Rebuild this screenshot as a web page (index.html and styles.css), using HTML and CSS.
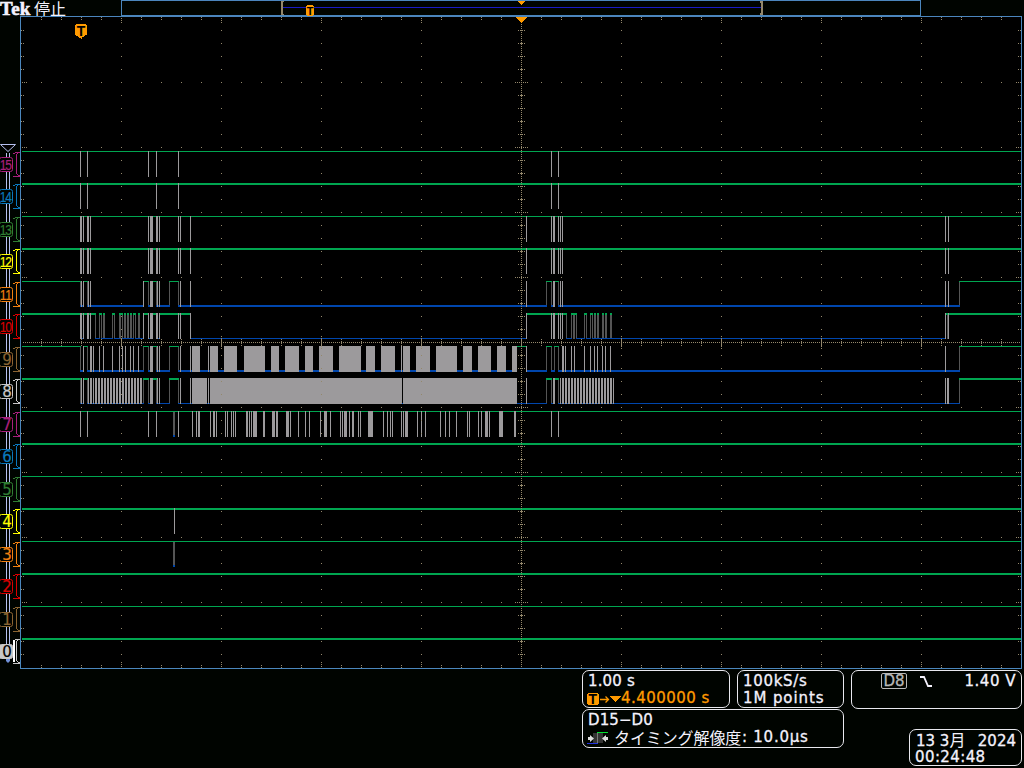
FILE: index.html
```html
<!DOCTYPE html>
<html lang="ja">
<head>
<meta charset="utf-8">
<title>Tek</title>
<link rel="stylesheet" href="styles.css">
</head>
<body>
<header class="top">
  <div class="status"><span class="brand">Tek</span><span class="state">停止</span></div>
  <svg class="overview" viewBox="121 0 800 16" width="800" height="16">
    <path class="frame-line" d="M121.5 16V.5H920.5V16M121 15.5H921"/>
    <path class="record" d="M283 7.5H761"/>
    <path class="tan" d="M281 1h3v1h-1v12h1v1h-3zM760 1h3v14h-3v-2h1V3h-1z"/>
    <path class="amber" d="M307 5h6v1h1v9h-1v1h-6v-1h-1V6h1z"/>
    <text class="mark" x="310" y="15" font-size="11">T</text>
    <path class="amber" d="M518 1h7v1h-1v1h-1v1h-1v1h-1V4h-1V3h-1V2h-1z"/>
  </svg>
</header>
<main class="stage">
  <svg id="gutter" viewBox="0 16 20 653" width="20" height="653"></svg>
  <svg id="plot" viewBox="20 16 1004 653" width="1004" height="653"></svg>
</main>
<footer class="readouts">
  <div class="left">
    <div class="pair">
      <section class="box time">
        <p class="w-scale">1.00 s</p>
        <p class="delay"><svg viewBox="0 0 34 14" width="34" height="14">
          <path class="amber" d="M1 1h10v1h1v10h-1v1H1v-1H0V2h1z"/><text class="mark" x="6" y="12" font-size="14">T</text>
          <path class="arrow" d="M13 7.5h8M18.500 4.500l3 3l-3 3"/><path class="amber" d="M23 4h11l-5.500 6z"/>
        </svg><span>4.400000 s</span></p>
      </section>
      <section class="box rate"><p class="w-rate">100kS/s</p><p class="w-pts">1M points</p></section>
    </div>
    <section class="box digital">
      <p class="w-bus">D15−D0</p>
      <p class="res"><svg viewBox="0 0 22 14" width="22" height="14">
        <path fill="#333" d="M6 2h10v10H6z"/><path fill="#777" d="M10 1h1v12h-1z"/>
        <path fill="#2233dd" d="M0 12h11v1H0z"/><path fill="#00e030" d="M10 1h11v1H10z"/>
        <path fill="#ddd" d="M1 6h2V4l4 3.500L3 11V9H1zM21 6h-2V4l-4 3.500l4 3.500V9h2z"/>
      </svg><span class="kana">タイミング解像度</span><span class="w-res">: 10.0µs</span></p>
    </section>
  </div>
  <div class="right">
    <section class="box trig">
      <span class="src">D8</span>
      <svg viewBox="0 0 14 14" width="14" height="14"><path class="edge" d="M1 2h4l4 9h4"/></svg>
      <span class="level">1.40 V</span>
    </section>
    <section class="box clock"><p class="date"><span>13 3<span class="month">月</span></span><span>2024</span></p><p class="hour">00:24:48</p></section>
  </div>
</footer>
<script src="scope.js"></script>
</body>
</html>
```

FILE: styles.css
```css
body { margin: 0; width: 1024px; height: 768px; overflow: hidden; background: #000400; color: #f4f2fc; font-family: "DejaVu Sans", "Noto Sans CJK JP", sans-serif; font-size: 15px; }
p { margin: 0; white-space: pre; }
svg { display: block; flex: none; }
.top { display: flex; height: 16px; }
.status { display: flex; width: 121px; height: 16px; line-height: 16px; white-space: nowrap; }
.brand { font: bold 19px/17px "Liberation Serif", serif; width: 34px; letter-spacing: .2px; -webkit-text-stroke: .6px #f4f2fc; }
.state { font: 400 16px/16px "Noto Sans CJK JP", sans-serif; }
.frame-line { fill: none; stroke: #4b86bd; shape-rendering: crispEdges; }
.record { stroke: #1a1ac4; }
.tan { fill: #94886c; }
.amber { fill: #ff9a00; shape-rendering: crispEdges; }
.mark { font-family: "Liberation Sans", sans-serif; font-weight: bold; text-anchor: middle; fill: #000; }
.stage { display: flex; height: 653px; }
#plot { background: #000; }
#plot, #gutter .rail, #gutter .bracket { shape-rendering: crispEdges; }
.hi { fill: #00a550; }
.lo { fill: #0046ad; }
.burst { fill: #9c9a9c; }
.slow { fill: #555; }
.dot { fill: #94886c; }
.rail { fill: #b4c0ee; }
.bracket { fill: none; }
.tag { font-family: "DejaVu Sans", sans-serif; font-size: 15px; text-anchor: middle; stroke-width: .2px; }
.tag.narrow { font-family: "Liberation Sans", sans-serif; }
.readouts { display: flex; height: 99px; padding-left: 582px; box-sizing: border-box; gap: 7px; -webkit-text-stroke: .3px; }
.left { display: flex; flex-direction: column; gap: 1px; padding-top: 1px; }
.pair { display: flex; gap: 7px; }
.box { box-sizing: border-box; border: 1px solid #e8e8ee; border-radius: 7px; line-height: 17px; }
.time { width: 148px; height: 38px; padding: 2px 0 0 5px; }
.rate { width: 107px; height: 38px; padding: 2px 0 0 5px; }
.digital { width: 262px; height: 39px; padding: 2px 0 0 5px; }
.delay { display: flex; align-items: center; height: 17px; color: #ff9a00; letter-spacing: .45px; }
.delay svg { margin-left: -1px; }
.arrow { fill: none; stroke: #ff9a00; stroke-width: 1.3; }
.w-scale { letter-spacing: .15px; }
.w-rate { letter-spacing: .7px; }
.w-pts { letter-spacing: .9px; }
.w-bus { letter-spacing: .1px; }
.res { display: flex; align-items: center; height: 17px; margin-left: -1px; }
.kana { font: 400 16px/17px "Noto Sans CJK JP", sans-serif; margin-left: 5px; width: 128px; letter-spacing: -.1px; -webkit-text-stroke: 0; }
.w-res { letter-spacing: .75px; }
.right { display: flex; flex-direction: column; align-items: flex-end; padding-top: 1px; gap: 20px; }
.trig { display: flex; width: 171px; height: 39px; padding: 2px 5px 0 29px; }
.src { height: 14px; width: 24px; border: 1px solid #b8b8b8; border-radius: 2px; color: #b8b8b8; line-height: 15px; text-align: center; }
.trig svg { margin: 2px 0 0 12px; }
.edge { fill: none; stroke: #f4f2fc; stroke-width: 1.8; }
.level { margin-left: auto; letter-spacing: .5px; }
.clock { width: 113px; height: 37px; padding: 3px 5px 0 6px; line-height: 16px; }
.date { display: flex; justify-content: space-between; align-items: flex-start; height: 16px; }
.date > span { height: 16px; }
.month { font: 400 16px/1 "Noto Sans CJK JP", sans-serif; line-height: 0; -webkit-text-stroke: 0; }
.hour { letter-spacing: .4px; margin-left: -1px; }
```

FILE: scope.js
```js
const NS = "http://www.w3.org/2000/svg";
const plot = document.getElementById("plot");
const gutter = document.getElementById("gutter");

function add(parent, tag, attrs, text) {
  const el = document.createElementNS(NS, tag);
  for (const k in attrs) el.setAttribute(k, attrs[k]);
  if (text) el.textContent = text;
  parent.append(el);
}
const bar = (cls, x, y, w, h) => add(plot, "rect", { class: cls, x, y, width: w, height: h });

// "a-b" is an inclusive span of sample columns, "a" a single column
const spans = s => s.trim().split(/\s+/).filter(Boolean).map(t => {
  const [a, b] = t.split("-").map(Number);
  return [a, b || a];
});
const stripes = (a, b) => {
  let s = "";
  for (let x = a; x <= b; x += 3) s += ` ${x}-${Math.min(x + 1, b)}`;
  return s;
};

const ALL = "22-1020";
const clocks = "80-81 83 87-88 90 148 150-152 156-157 159 178 180 190 526 551 553-554 558 560 562 945 948";
const states11 = {
  hi: "22-80 84-87 143-148 152-156 169-178 546-551 554-558 959-1020",
  lo: "80-83 87-143 148-150 156-169 178-546 551-553 558-959"
};
const waves = {
  15: { hi: ALL, burst: "80 87 148 156 178 551 558" },
  14: { hi: ALL, burst: "80 87 156 178 551 558" },
  13: { hi: ALL, burst: clocks },
  12: { hi: ALL, burst: clocks },
  11: { ...states11, slow: "80 87 148 156 169 178 546 551 558 959", burst: "81 83 88 90 143 150-152 157 159 180 190 526 553-554 560 562 945 948" },
  10: {
    hi: "22-95 99-101 103-104 112-114 119-122 124-125 127-128 130-131 133-135 138-139 143-147 152-156 159-190 526-566 571-576 584-586 590-592 594-595 597-598 602-603 605-606 610-611 945-1020",
    lo: "80-83 95-99 101-103 104-112 114-119 122-124 125-127 128-130 131-133 135-138 139-143 148-150 156-158 190-526 562-562 566-571 576-584 586-590 592-594 595-597 598-602 603-605 606-610 611-945",
    slow: "95 99 101 103-104 112 114 119-120 122 124-125 127-128 130-131 133 135 138-139 566 571 573-574 576 584 586 590 592 594-595 597-598 602-603 605-606 610-611 947",
    burst: "80-81 83 87-88 90 143 148 150-152 156-157 159 178 180 190 526 551 553-554 558 560 562 945 948"
  },
  9: {
    hi: "22-80 83-87 143-148 152-156 169-178 517-526 546-551 554-558 959-1020",
    lo: "80-83 87-143 148-150 156-169 178-516 526-546 551-554 558-959",
    slow: "80 87 143 148 156 169 178 546 551 554 558 959",
    burst: "83 90-91 93 99 103 112 119 122 125 130 133 138 150-152 157 159 180 190 192-199 208 210-217 224-236 244-264 271-278 285-298 305-312 319-332 339-360 366-374 381-394 401 403-409 416-429 436-456 463-471 478-490 497-505 512-516 526 562-563 565 571 574 584 590 594 597 602 605 610 945"
  },
  8: {
    hi: "22-80 83-87 143-148 152-156 169-178 546-551 554-558 959-1020",
    lo: "80-83 87-143 148-150 156-169 178-192 206-210 402 517-546 551-553 558-959",
    slow: "80 87 143 148 156 169 178 546 551 558 959",
    burst: "81 83 88 90-91 93" + stripes(95, 141) + " 150-152 157 159 180 190 192-206 208 210-401 403-516 526 553-554 560" + stripes(562, 613) + " 945 947-948"
  },
  7: { hi: ALL, slow: "173-174", burst: "80 87 148 156 178 192 196 198-199 210 213-214 216 225 227 231 233 235 246-247 249 251 253-256 263-264 272-274 276-277 286-288 290 298 305 309 320 324-326 330 340 342 344-346 349 352-353 358 360 368-372 383 387 390 392 401 403 405-407 417 421 425 440 445 449 456 467 469 478 481 485-487 489 499-502 514-515 551 558" },
  4: { hi: ALL, burst: "174" },
  3: { hi: ALL, slow: "173-174" }
};

const names = ["#c8c8c8", "#8a6432", "#d80000", "#f08010", "#ffff00", "#2f7d32", "#0a78bc", "#a8207c"];

// rails behind the channel tags
for (const x of [6, 9]) add(gutter, "rect", { class: "rail", x, y: 153, width: 1, height: 508 });
add(gutter, "path", { d: "M.5 144.500H15.500L8 151.500Z", fill: "#000", stroke: "#b4c0ee" });
add(gutter, "path", { d: "M6 659v2l2 2l2-2v-2", fill: "#7090d8" });

for (let ch = 15; ch >= 0; ch--) {
  const odd = ch % 2;
  const y = Math.floor(151 + (15 - ch) * 32.5);
  const w = waves[ch] || { hi: ALL };
  for (const [a, b] of spans(w.hi)) bar("hi", a, y, b - a + 1, odd ? 1 : 2);
  for (const [a, b] of spans(w.slow || "")) bar("slow", a, y + (odd ? 1 : 2), b - a + 1, 24);
  for (const [a, b] of spans(w.lo || "")) bar("lo", a, y + (odd ? 24 : 25), b - a + 1, odd ? 2 : 1);
  for (const [a, b] of spans(w.burst || "")) bar("burst", a, y, b - a + 1, 26);
  if (ch === 7 || ch === 3) bar("lo", 173, y + 24, 2, 2);

  const on = ch === 0;
  const color = names[ch % 8];
  add(gutter, "rect", { x: -.5, y: y + 6.5, width: 13, height: 14, rx: 2, fill: on ? "#c8c8c8" : "#000400", stroke: color });
  add(gutter, "path", { class: "bracket", d: `M13 ${y + 2.5}h2M15 ${y + 1.5}h5M17 ${y + 2.5}h1M16.500 ${y + 3}V${y + 23}M17 ${y + 23.5}h1M18 ${y + 24.5}h2M13 ${y + 25.5}h7`, stroke: color });
  if (on) add(gutter, "path", { class: "bracket", d: `M14 ${y + 2}V${y + 24}`, stroke: "#fff", "stroke-width": 2 });
  const ink = { fill: on ? "#000" : color, stroke: on ? "#000" : color };
  if (ch > 9) {
    // two digits share the width of one tag
    for (const [i, x] of [[0, 3], [1, 8.5]]) {
      add(gutter, "text", { ...ink, class: "tag narrow", transform: `translate(${x} ${y + 19}) scale(.8 1)` }, String(ch)[i]);
    }
  } else add(gutter, "text", { ...ink, class: "tag", x: 7, y: y + 19 }, String(ch));
}

// graticule: 10 x 10 divisions of 100 x 65 px around (521, 342)
let d = "";
const dot = (x, y) => { d += `M${x} ${y}h1v1h-1z`; };
for (let y = 82; y <= 602; y += 65) {
  if (y === 342) continue;
  for (let x = 41; x < 1020; x += 20) dot(x, y);
  for (const k of [0, 2, 4]) { dot(22 + k, y); dot(1020 - k, y); }
  for (let k = -6; k <= 6; k += 2) dot(521 + k, y);
}
for (let y = 30; y < 667; y += 13) {
  if (y === 342) continue;
  for (let x = 121; x <= 921; x += 100) dot(x, y);
  if ((y - 17) % 65 === 0) continue;
  dot(21, y); dot(23, y); dot(1018, y); dot(1020, y);
  for (const k of [-3, -1, 0, 1, 3]) dot(521 + k, y);
}
for (let x = 23; x < 1021; x += 2) dot(x, 342);
for (let y = 18; y < 668; y += 2) dot(521, y);
for (let x = 41; x < 1020; x += 20) {
  for (const k of [-3, -1, 0, 1, 3]) dot(x, 342 + k);
  if ((x - 21) % 100) { dot(x, 17); dot(x, 19); dot(x, 665); dot(x, 667); }
  else for (const k of [0, 2, 4]) { dot(x, 18 + k); dot(x, 666 - k); dot(x, 340 - k); dot(x, 344 + k); }
}
add(plot, "path", { class: "dot", d });

add(plot, "path", { class: "frame-line", d: "M20.500 16.500H1021.500V668.500H20.500Z" });
add(plot, "path", { class: "amber", d: "M516 17h11v1h-1v1h-1v1h-1v1h-1v1h-1v1h-1v-1h-1v-1h-1v-1h-1v-1h-1v-1h-1z" });
add(plot, "path", { class: "amber", d: "M76 24h10v1h1v10h-2v1h-1v1h-2v2h-1v-1h-2v-1h-1v-1h-2v-1h-1V25h1z" });
add(plot, "text", { class: "mark", x: 81, y: 35.500, "font-size": 14 }, "T");
```
